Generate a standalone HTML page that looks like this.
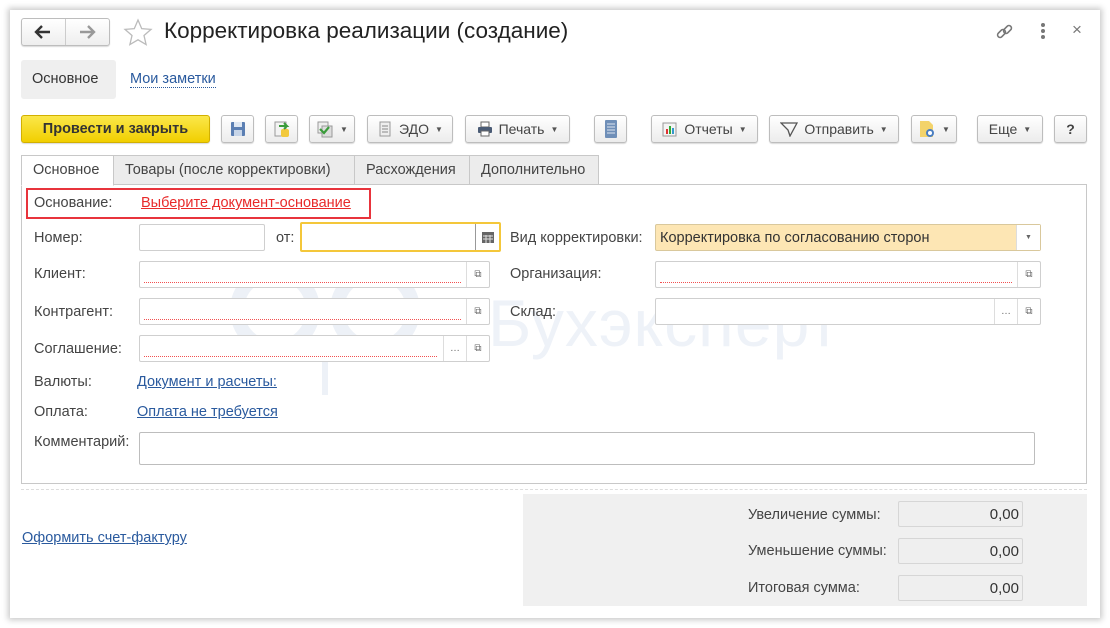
<!DOCTYPE html>
<html><head><meta charset="utf-8"><style>
*{box-sizing:border-box;margin:0;padding:0}
body{width:1110px;height:628px;background:#fff;position:relative;overflow:hidden;font-family:"Liberation Sans","DejaVu Sans",sans-serif;font-size:14px;color:#444}
.win{position:absolute;left:10px;top:10px;width:1090px;height:608px;background:#fff;box-shadow:0 0 6px 2px rgba(0,0,0,.22)}
.a{position:absolute}
.btn{position:absolute;height:28px;top:115px;border:1px solid #bdbdbd;border-radius:3px;background:linear-gradient(#fff,#ececec);box-shadow:0 1px 1px rgba(0,0,0,.15);font-size:14px;color:#444;display:flex;align-items:center;justify-content:center;gap:6px}
.dd{font-size:8px;color:#555}
.tab{position:absolute;top:155px;height:30px;border:1px solid #c8c8c8;background:#ececec;font-size:14.5px;color:#444;padding:6px 10px 0 11px}
.lbl{position:absolute;font-size:14.5px;color:#444}
.fld{position:absolute;height:27px;border:1px solid #cfcfcf;border-radius:2px;background:#fff}
.req{position:absolute;left:4px;right:4px;bottom:4px;border-bottom:1px dotted #f25050}
.sb{position:absolute;top:0;bottom:0;width:23px;border-left:1px solid #ddd;font-size:10px;color:#666;display:flex;align-items:center;justify-content:center}
.lnk{position:absolute;font-size:14.5px;color:#2a5a9e;text-decoration:underline}
.sum{position:absolute;left:898px;width:125px;height:26px;border:1px solid #d6d6d6;border-radius:2px;background:#efefef;text-align:right;padding:4px 3px 0 0;font-size:15px;color:#333}
</style></head><body>
<div class="win"></div>
<!-- nav -->
<div class="a" style="left:21px;top:18px;width:89px;height:28px;border:1px solid #bdbdbd;border-radius:3px;background:linear-gradient(#fff,#eee);box-shadow:0 1px 1px rgba(0,0,0,.15)"></div>
<div class="a" style="left:65px;top:19px;width:1px;height:26px;background:#ccc"></div>
<svg class="a" style="left:33px;top:23px" width="20" height="18"><path d="M17 9H4M9 3L3 9l6 6" stroke="#333" stroke-width="2.4" fill="none"/></svg>
<svg class="a" style="left:78px;top:23px" width="20" height="18"><path d="M2 9h13M10 3l6 6-6 6" stroke="#999" stroke-width="2.4" fill="none"/></svg>
<svg class="a" style="left:123px;top:18px" width="30" height="29"><path d="M15 2l3.7 8.6 9.3.8-7 6.1 2.1 9.1L15 21.8 6.9 26.6 9 17.5 2 11.4l9.3-.8z" fill="none" stroke="#bbb" stroke-width="1.3"/></svg>
<div class="a" style="left:164px;top:18px;font-size:22.5px;color:#222">Корректировка реализации (создание)</div>
<svg class="a" style="left:995px;top:22px" width="20" height="20"><g fill="none" stroke="#777" stroke-width="1.6"><rect x="2" y="9" width="9" height="5" rx="2.5" transform="rotate(-45 6.5 11.5)"/><rect x="8" y="5" width="9" height="5" rx="2.5" transform="rotate(-45 12.5 7.5)"/></g></svg>
<div class="a" style="left:1041px;top:23px;width:4px;height:4px;border-radius:2px;background:#777;box-shadow:0 6px #777,0 12px #777"></div>
<div class="a" style="left:1072px;top:20px;font-size:17px;color:#777">×</div>
<!-- subtabs -->
<div class="a" style="left:21px;top:60px;width:95px;height:39px;background:#efefef;border-radius:3px;font-size:14.5px;color:#333;padding:11px 0 0 11px">Основное</div>
<div class="a" style="left:130px;top:71px;font-size:14.5px;color:#2a5a9e;border-bottom:1px dotted #2a5a9e;line-height:16px">Мои заметки</div>
<!-- toolbar -->
<div class="btn" style="left:21px;width:189px;background:linear-gradient(#fbe74a,#f1cf00);border-color:#d2b000;font-weight:bold;color:#333;font-size:14.5px">Провести и закрыть</div>
<div class="btn" style="left:221px;width:33px"><svg width="16" height="16"><rect x="1" y="1" width="14" height="14" rx="1" fill="#5b7fb3"/><rect x="4" y="1" width="8" height="5" fill="#dfe8f3"/><rect x="4" y="9" width="8" height="6" fill="#c7d5e8"/></svg></div>
<div class="btn" style="left:265px;width:33px"><svg width="18" height="18"><rect x="2" y="2" width="11" height="14" fill="#f3f3f3" stroke="#999"/><rect x="8" y="9" width="8" height="8" rx="2" fill="#f2c93c"/><path d="M6 6h8l-3-3M14 6l-3 3" stroke="#3a9c3a" stroke-width="2" fill="none"/></svg></div>
<div class="btn" style="left:309px;width:46px"><svg width="18" height="18"><rect x="2" y="2" width="10" height="11" fill="#eee" stroke="#999"/><rect x="6" y="6" width="10" height="11" fill="#ddd" stroke="#999"/><path d="M4 9l4 4 5-6" stroke="#3a9c3a" stroke-width="2.2" fill="none"/></svg><span class="dd">▼</span></div>
<div class="btn" style="left:367px;width:86px"><svg width="16" height="16"><rect x="3" y="1" width="10" height="14" fill="#eee" stroke="#999"/><path d="M5 5h6M5 8h6M5 11h6" stroke="#888"/></svg>ЭДО <span class="dd">▼</span></div>
<div class="btn" style="left:465px;width:105px"><svg width="16" height="16"><rect x="4" y="1" width="8" height="5" fill="#fff" stroke="#666"/><rect x="1" y="6" width="14" height="6" rx="1" fill="#4a5b75"/><rect x="4" y="10" width="8" height="5" fill="#fff" stroke="#666"/></svg>Печать <span class="dd">▼</span></div>
<div class="btn" style="left:594px;width:33px"><svg width="12" height="18"><rect x="0" y="0" width="12" height="18" rx="1" fill="#6f8fb8"/><path d="M2 4h8M2 7h8M2 10h8M2 13h8" stroke="#dde6f1"/></svg></div>
<div class="btn" style="left:651px;width:107px"><svg width="16" height="16"><rect x="1" y="2" width="13" height="13" fill="#f4f4f4" stroke="#999"/><rect x="4" y="8" width="2" height="5" fill="#d33"/><rect x="7" y="5" width="2" height="8" fill="#3a3"/><rect x="10" y="7" width="2" height="6" fill="#39c"/></svg>Отчеты <span class="dd">▼</span></div>
<div class="btn" style="left:769px;width:130px"><svg width="18" height="16"><path d="M1 2l16 0-7 13-2-6z" fill="none" stroke="#555" stroke-width="1.3"/></svg>Отправить <span class="dd">▼</span></div>
<div class="btn" style="left:911px;width:46px"><svg width="18" height="18"><path d="M2 1h9l4 4v12H2z" fill="#f3d36b"/><circle cx="12" cy="13" r="4" fill="#4a7ec2"/><circle cx="12" cy="13" r="2" fill="#fff"/></svg><span class="dd">▼</span></div>
<div class="btn" style="left:977px;width:66px">Еще <span class="dd">▼</span></div>
<div class="btn" style="left:1054px;width:33px;font-weight:bold">?</div>
<!-- tabs -->
<div class="a" style="left:21px;top:184px;width:1066px;height:300px;border:1px solid #c8c8c8;background:#fff"></div>
<div class="tab" style="left:21px;width:93px;background:#fff;border-bottom-color:#fff;height:31px">Основное</div>
<div class="tab" style="left:113px;width:242px">Товары (после корректировки)</div>
<div class="tab" style="left:354px;width:116px">Расхождения</div>
<div class="tab" style="left:469px;width:130px">Дополнительно</div>
<!-- watermark -->
<div class="a" style="left:488px;top:285px;font-size:66px;color:#eef2f8;letter-spacing:1px">Бухэксперт</div>
<svg class="a" style="left:200px;top:240px" width="280" height="160"><g fill="none" stroke="#edf1f7" stroke-width="14"><circle cx="75" cy="70" r="38"/><circle cx="175" cy="70" r="38"/><path d="M10 30c30 10 60 10 115 0 55 10 85 10 115 0"/></g><path d="M125 95v60" stroke="#edf1f7" stroke-width="6"/></svg>
<!-- form -->
<div class="a" style="left:26px;top:188px;width:345px;height:31px;border:2px solid #e8343c"></div>
<div class="lbl" style="left:34px;top:195px">Основание:</div>
<div class="a" style="left:141px;top:195px;font-size:14.5px;color:#e82a2a;text-decoration:underline">Выберите документ-основание</div>

<div class="lbl" style="left:34px;top:230px">Номер:</div>
<div class="fld" style="left:139px;top:224px;width:126px"></div>
<div class="lbl" style="left:276px;top:230px">от:</div>
<div class="fld" style="left:300px;top:222px;width:201px;height:30px;border:2px solid #f4c73a"><div class="sb" style="right:0;border-left:1px solid #999;width:24px"><svg width="12" height="12"><rect x="0" y="1" width="12" height="11" fill="#666"/><path d="M1 5h10M1 8h10M4 4v8M8 4v8" stroke="#ddd"/></svg></div></div>
<div class="lbl" style="left:510px;top:230px">Вид корректировки:</div>
<div class="fld" style="left:655px;top:224px;width:386px;background:#fde6b4;border-color:#d9c89c"><span style="position:absolute;left:4px;top:5px;font-size:14.5px;color:#333">Корректировка по согласованию сторон</span><div class="sb" style="right:0;background:#fff;width:24px"><span style="font-size:7px">▼</span></div></div>

<div class="lbl" style="left:34px;top:266px">Клиент:</div>
<div class="fld" style="left:139px;top:261px;width:351px"><div class="req" style="right:28px"></div><div class="sb" style="right:0">⧉</div></div>
<div class="lbl" style="left:510px;top:266px">Организация:</div>
<div class="fld" style="left:655px;top:261px;width:386px"><div class="req" style="right:28px"></div><div class="sb" style="right:0">⧉</div></div>

<div class="lbl" style="left:34px;top:304px">Контрагент:</div>
<div class="fld" style="left:139px;top:298px;width:351px"><div class="req" style="right:28px"></div><div class="sb" style="right:0">⧉</div></div>
<div class="lbl" style="left:510px;top:304px">Склад:</div>
<div class="fld" style="left:655px;top:298px;width:386px"><div class="sb" style="right:23px">…</div><div class="sb" style="right:0">⧉</div></div>

<div class="lbl" style="left:34px;top:341px">Соглашение:</div>
<div class="fld" style="left:139px;top:335px;width:351px"><div class="req" style="right:52px"></div><div class="sb" style="right:23px">…</div><div class="sb" style="right:0">⧉</div></div>

<div class="lbl" style="left:34px;top:374px">Валюты:</div>
<div class="lnk" style="left:137px;top:374px">Документ и расчеты:</div>
<div class="lbl" style="left:34px;top:404px">Оплата:</div>
<div class="lnk" style="left:137px;top:404px">Оплата не требуется</div>
<div class="lbl" style="left:34px;top:434px">Комментарий:</div>
<div class="fld" style="left:139px;top:432px;width:896px;height:33px;border-color:#bdbdbd"></div>

<div class="a" style="left:21px;top:489px;width:1066px;border-top:1px dashed #ddd"></div>
<div class="lnk" style="left:22px;top:530px">Оформить счет-фактуру</div>
<div class="a" style="left:523px;top:494px;width:564px;height:112px;background:#f0f0f0"></div>
<div class="lbl" style="left:748px;top:507px">Увеличение суммы:</div>
<div class="sum" style="top:501px">0,00</div>
<div class="lbl" style="left:748px;top:543px">Уменьшение суммы:</div>
<div class="sum" style="top:538px">0,00</div>
<div class="lbl" style="left:748px;top:580px">Итоговая сумма:</div>
<div class="sum" style="top:575px">0,00</div>
</body></html>
